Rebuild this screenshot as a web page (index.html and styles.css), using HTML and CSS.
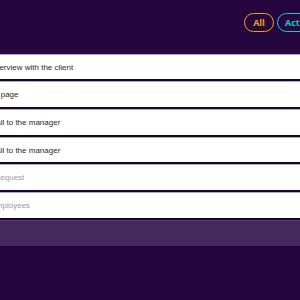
FILE: index.html
```html
<!DOCTYPE html>
<html lang="en">
<head>
<meta charset="utf-8">
<title>Todos</title>
<link rel="stylesheet" href="styles.css">
</head>
<body>
<div class="app">
  <header class="header">
    <nav class="filters">
      <button class="filter filter-all">All</button>
      <button class="filter filter-active">Active</button>
      <button class="filter filter-completed">Completed</button>
    </nav>
  </header>
  <ul class="list">
    <li class="item">Interview with the client</li>
    <li class="item">UI page</li>
    <li class="item">Call to the manager</li>
    <li class="item">Call to the manager</li>
    <li class="item done">A request</li>
    <li class="item done">Employees</li>
  </ul>
  <div class="footer"></div>
</div>
</body>
</html>
```
FILE: styles.css
```css
html, body {
  margin: 0;
  padding: 0;
  background: #26063f;
  height: 100%;
}
body {
  display: flex;
  justify-content: center;
  overflow: hidden;
}
.app {
  flex: none;
  width: 340px;
}
.header {
  height: 53.5px;
  box-sizing: border-box;
  padding: 13px 0 0 264px;
}
.filters {
  display: flex;
  gap: 3px;
  white-space: nowrap;
}
.filter {
  flex: none;
  height: 19px;
  padding: 0 7px;
  border-radius: 10px;
  background: transparent;
  font: 700 9px "Open Sans", sans-serif;
  cursor: pointer;
}
.filter-all {
  width: 30px;
  padding: 0;
  border: 1.5px solid #f0a30a;
  color: #f0a30a;
}
.filter-active {
  border: 1.5px solid #1fc6c6;
  color: #1fc6c6;
}
.filter-completed {
  border: 1.5px solid #e0e0e0;
  color: #e0e0e0;
}
.list {
  list-style: none;
  margin: 0;
  padding: 0;
  background: #15062a;
}
.item {
  height: 24.7px;
  background: #fff;
  border-top: 1px solid #b3a6c4;
  border-bottom: 2px solid #15062a;
  padding-left: 10.5px;
  font: 8px "Liberation Sans", Arial, sans-serif;
  line-height: 25.5px;
  color: #2a2a2a;
}
.item.done {
  color: #9a9a9a;
}
.footer {
  height: 25px;
  background: #452a5e;
  border-top: 1px solid #5b4174;
}
```
